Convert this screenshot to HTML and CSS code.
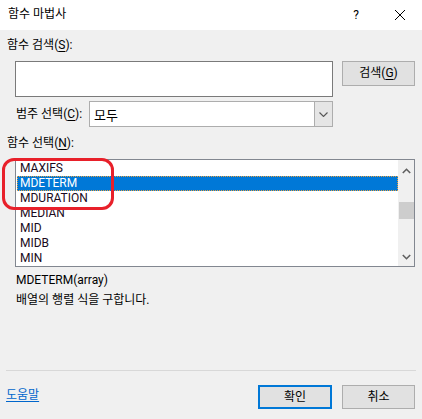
FILE: index.html
```html
<!DOCTYPE html>
<html lang="ko">
<head>
<meta charset="utf-8">
<title>함수 마법사</title>
<link rel="stylesheet" href="styles.css">
</head>
<body>
<div class="window">
  <div class="titlebar">
    <span class="title">함수 마법사</span>
    <span class="help">?</span>
    <span class="close">
      <svg width="12" height="12" viewBox="0 0 12 12"><path d="M1 1 L11 11 M11 1 L1 11" stroke="#000" stroke-width="1" fill="none"/></svg>
    </span>
  </div>
  <div class="dialog">
    <div class="label">함수 검색(<u>S</u>):</div>
    <div class="search-row">
      <div class="textbox"></div>
      <div class="btn">검색(<u>G</u>)</div>
    </div>
    <div class="cat-row">
      <span class="cat-label">범주 선택(<u>C</u>):</span>
      <div class="select">
        <span class="select-value">모두</span>
        <span class="select-arrow">
          <svg width="9" height="5" viewBox="0 0 9 5"><path d="M0.5 0.5 L4.5 4.5 L8.5 0.5" stroke="#555" stroke-width="1.1" fill="none"/></svg>
        </span>
      </div>
    </div>
    <div class="label label-list">함수 선택(<u>N</u>):</div>
    <div class="listbox">
      <ul class="items">
        <li>MAXIFS</li>
        <li class="selected">MDETERM</li>
        <li>MDURATION</li>
        <li>MEDIAN</li>
        <li>MID</li>
        <li>MIDB</li>
        <li>MIN</li>
      </ul>
      <div class="scrollbar">
        <svg class="arrow" width="9" height="6" viewBox="0 0 9 6"><path d="M0.8 5 L4.5 1.3 L8.2 5" stroke="#606060" stroke-width="1.6" fill="none"/></svg>
        <div class="track"><div class="thumb"></div></div>
        <svg class="arrow" width="9" height="6" viewBox="0 0 9 6"><path d="M0.8 1 L4.5 4.7 L8.2 1" stroke="#606060" stroke-width="1.6" fill="none"/></svg>
      </div>
    </div>
    <div class="signature">MDETERM(array)</div>
    <div class="desc">배열의 행렬 식을 구합니다.</div>
    <div class="spacer"></div>
    <div class="separator"></div>
    <div class="footer">
      <a class="link">도움말</a>
      <div class="buttons">
        <div class="btn btn-default">확인</div>
        <div class="btn">취소</div>
      </div>
    </div>
    <div class="annotation"></div>
  </div>
</div>
</body>
</html>
```
FILE: styles.css
```css
html, body {
  margin: 0;
  padding: 0;
}
body {
  width: 422px;
  height: 419px;
  overflow: hidden;
  font-family: Roboto, "Noto Sans CJK KR", sans-serif;
  font-size: 12px;
  color: #000;
}
.window {
  width: 422px;
  height: 419px;
  display: flex;
  flex-direction: column;
}
.titlebar {
  height: 30px;
  background: #fff;
  display: flex;
  align-items: center;
  padding-left: 8px;
  flex: none;
}
.title {
  flex: 1;
  line-height: 15px;
  margin-top: -1px;
}
.help {
  width: 20px;
  text-align: center;
  margin-right: 28px;
}
.close {
  display: flex;
  align-items: center;
  justify-content: center;
  width: 12px;
  margin-right: 16px;
}
.dialog {
  position: relative;
  flex: 1;
  background: #f0f0f0;
  display: flex;
  flex-direction: column;
}
u {
  text-decoration: underline;
  text-underline-offset: 2px;
}
.label {
  margin-top: 8px;
  padding-left: 7px;
  line-height: 15px;
  height: 15px;
}
.label-list {
  margin-top: 9px;
}
.search-row {
  display: flex;
  align-items: flex-start;
  gap: 9px;
  margin-top: 8px;
  padding-left: 15px;
}
.textbox {
  width: 318px;
  height: 36px;
  box-sizing: border-box;
  background: #fff;
  border: 1px solid #7a7a7a;
}
.btn {
  width: 73px;
  height: 25px;
  box-sizing: border-box;
  background: #e1e1e1;
  border: 1px solid #adadad;
  display: flex;
  align-items: center;
  justify-content: center;
  line-height: 15px;
}
.cat-row {
  display: flex;
  align-items: center;
  margin-top: 4px;
  padding-left: 16px;
}
.cat-label {
  width: 73px;
  line-height: 15px;
}
.select {
  width: 244px;
  height: 26px;
  box-sizing: border-box;
  background: #fff;
  border: 1px solid #adadad;
  display: flex;
  align-items: stretch;
}
.select-value {
  flex: 1;
  padding-left: 4px;
  display: flex;
  align-items: center;
  font-size: 13px;
}
.select-arrow {
  width: 17px;
  background: #e5e5e5;
  border-left: 1px solid #adadad;
  display: flex;
  align-items: center;
  justify-content: center;
}
.listbox {
  margin-top: 8px;
  margin-left: 15px;
  width: 400px;
  height: 108px;
  box-sizing: border-box;
  border: 1px solid #828790;
  background: #fff;
  display: flex;
}
.items {
  list-style: none;
  margin: 0;
  padding: 1px 0 0 1px;
  flex: 1;
}
.items li {
  height: 15px;
  line-height: 15px;
  padding-left: 3px;
  box-sizing: border-box;
  white-space: nowrap;
  color: #1a0a20;
}
.items li.selected {
  background: #0078d7;
  color: #fff;
  outline: 1px dotted #e8a040;
  outline-offset: -1px;
}
.scrollbar {
  width: 16px;
  background: #f0f0f0;
  display: flex;
  flex-direction: column;
  align-items: center;
  padding: 8px 0 6px;
  box-sizing: border-box;
}
.track {
  flex: 1;
  width: 15px;
  padding-top: 28px;
}
.thumb {
  height: 17px;
  background: #cdcdcd;
}
.signature {
  margin-top: 6px;
  padding-left: 16px;
  line-height: 15px;
}
.desc {
  margin-top: 5px;
  padding-left: 16px;
  line-height: 15px;
}
.spacer {
  flex: 1;
}
.separator {
  height: 1px;
  background: #d8d8d8;
  margin: 0 6px 0 6px;
}
.footer {
  display: flex;
  align-items: center;
  justify-content: space-between;
  margin-top: 14px;
  margin-bottom: 10px;
  padding: 0 7px 0 6px;
}
.link {
  color: #0066cc;
  text-decoration: underline;
  text-underline-offset: 2px;
  line-height: 15px;
  margin-top: -3px;
}
.buttons {
  display: flex;
  gap: 10px;
}
.btn-default {
  border: 2px solid #0078d7;
  height: 24px;
  width: 74px;
}
.buttons .btn {
  height: 24px;
}
.annotation {
  position: absolute;
  left: 2px;
  top: 128px;
  width: 112px;
  height: 52px;
  box-sizing: border-box;
  border: 3px solid #e8202a;
  border-radius: 12px;
  pointer-events: none;
}
```
